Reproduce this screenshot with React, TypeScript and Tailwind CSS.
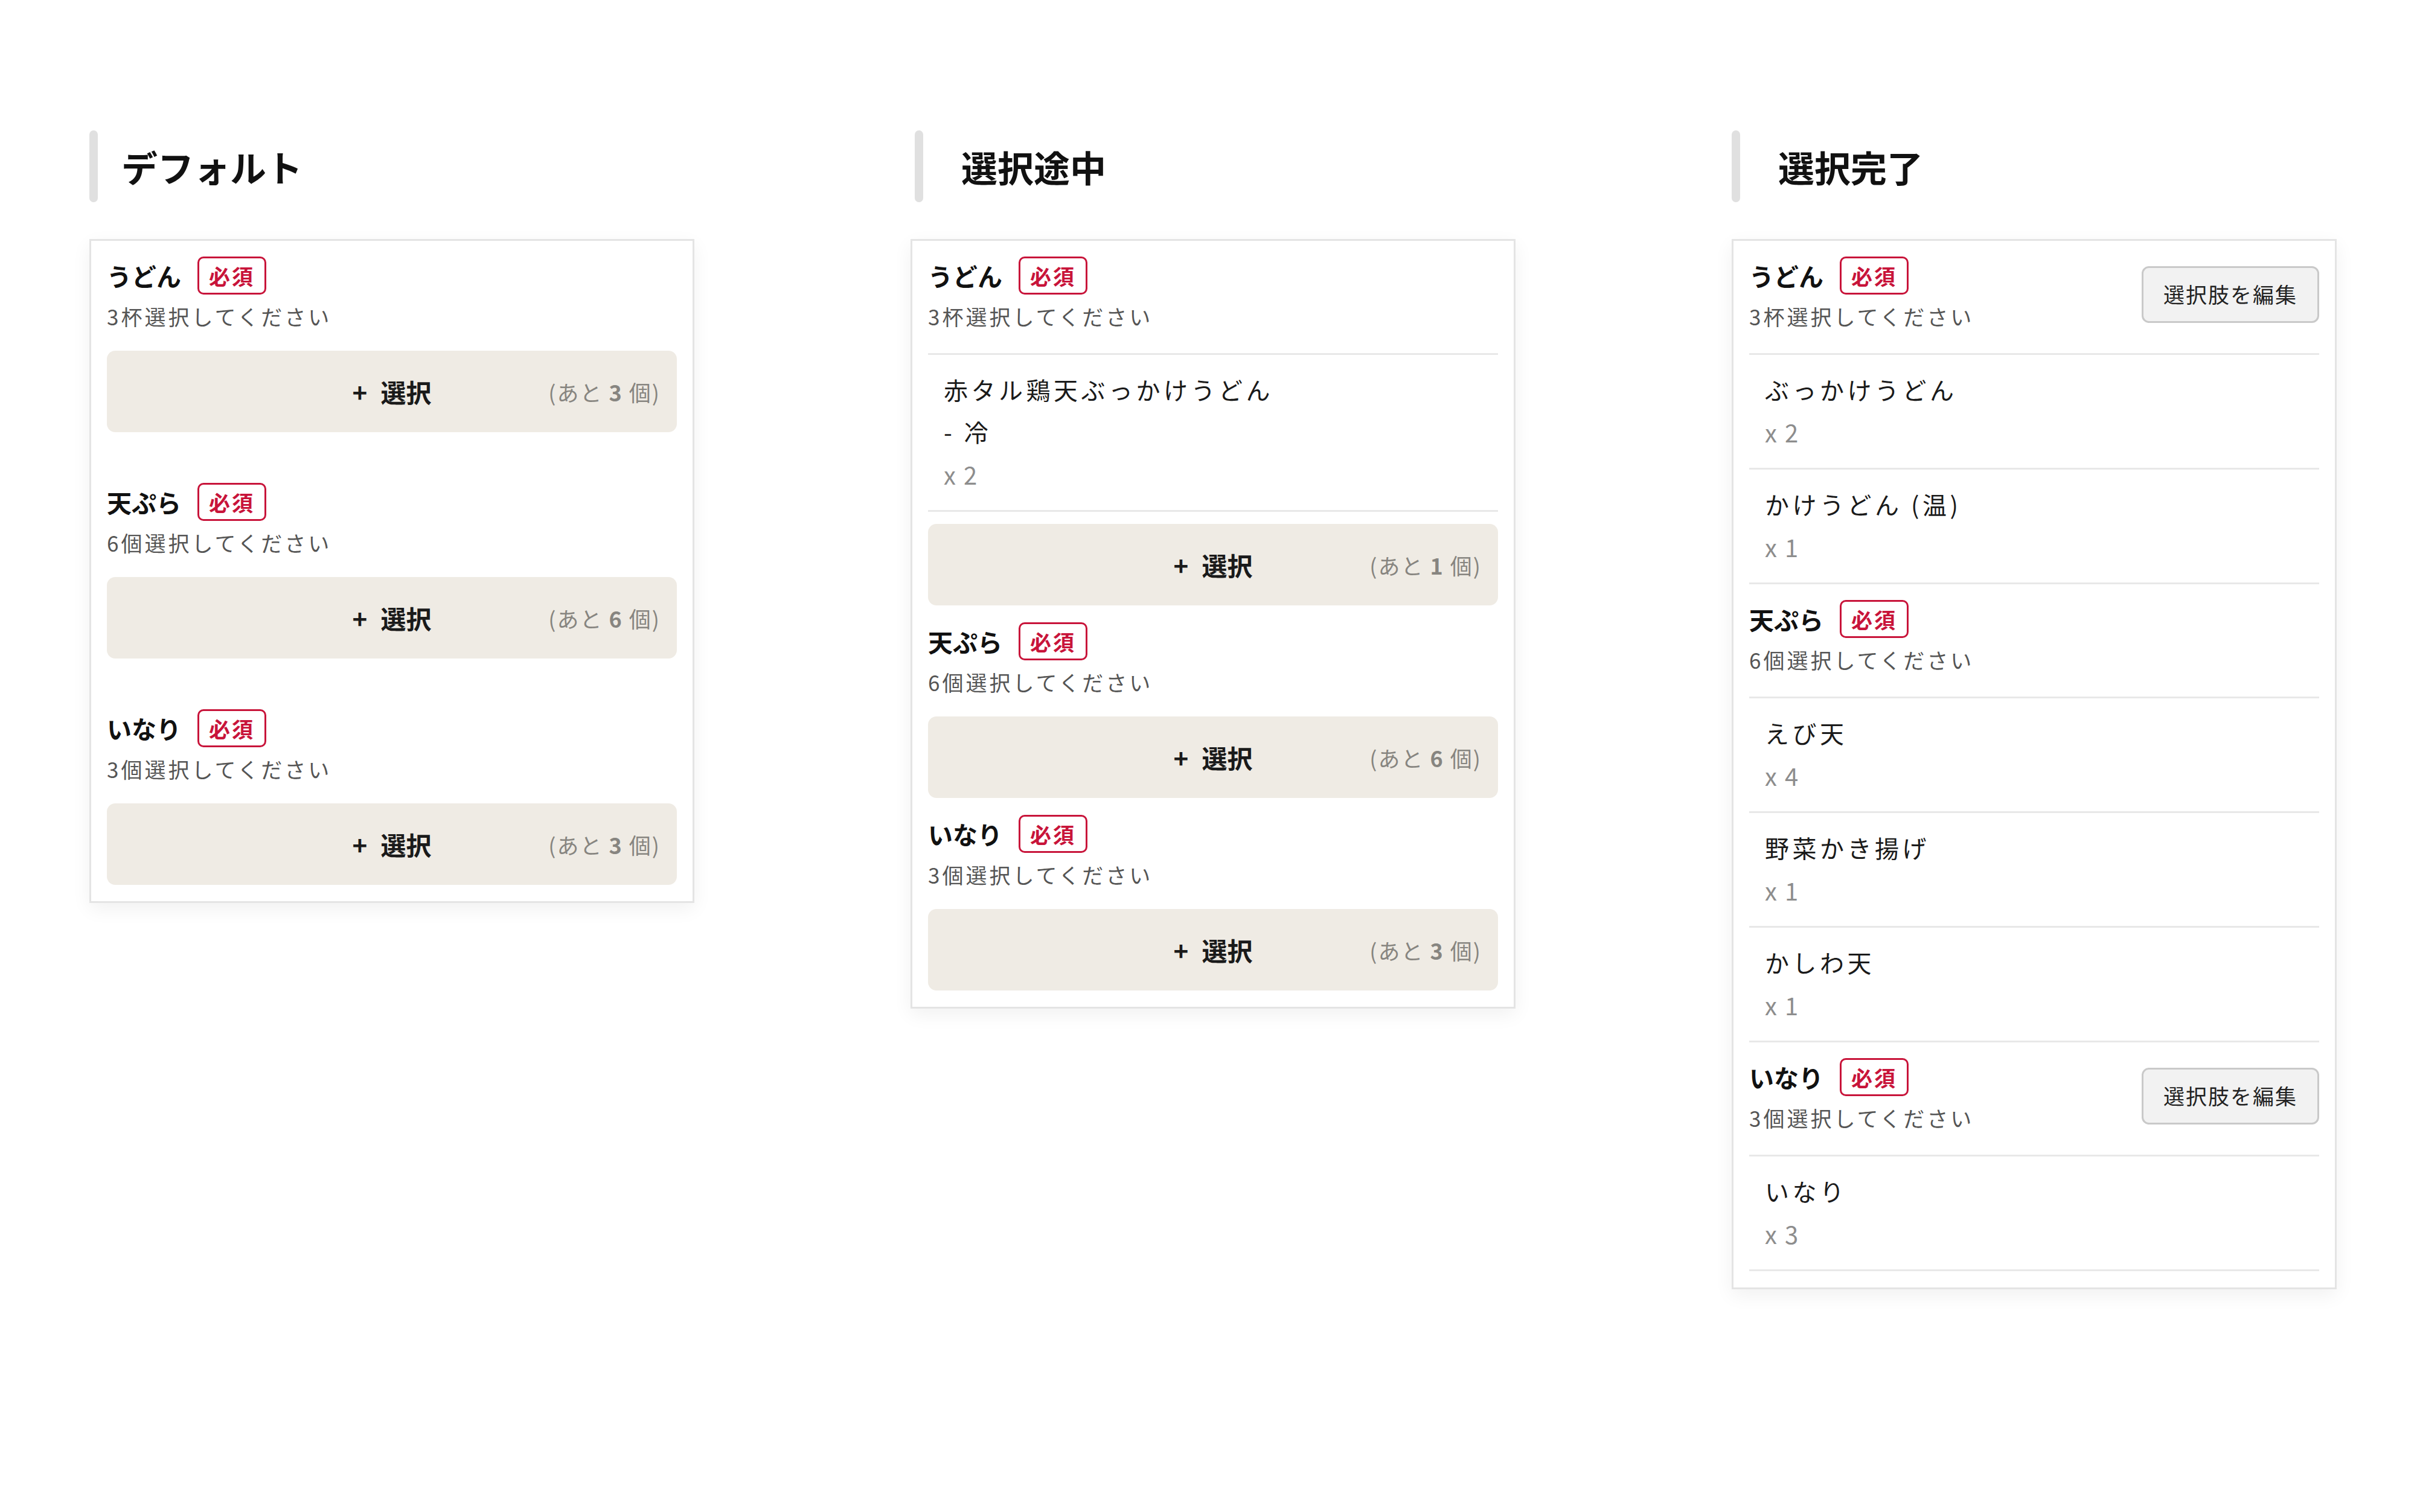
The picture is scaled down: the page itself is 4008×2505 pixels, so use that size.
type Item = { lines: string[]; qty: number };

type Section = {
  name: string;
  note: string;
  remaining: number;
  items?: Item[];
  edit?: boolean;
};

type Mode = "default" | "progress" | "done";

const defaultSections: Section[] = [
  { name: "うどん", note: "3杯選択してください", remaining: 3 },
  { name: "天ぷら", note: "6個選択してください", remaining: 6 },
  { name: "いなり", note: "3個選択してください", remaining: 3 },
];

const progressSections: Section[] = [
  {
    name: "うどん",
    note: "3杯選択してください",
    remaining: 1,
    items: [{ lines: ["赤タル鶏天ぶっかけうどん", "- 冷"], qty: 2 }],
  },
  { name: "天ぷら", note: "6個選択してください", remaining: 6 },
  { name: "いなり", note: "3個選択してください", remaining: 3 },
];

const doneSections: Section[] = [
  {
    name: "うどん",
    note: "3杯選択してください",
    remaining: 0,
    edit: true,
    items: [
      { lines: ["ぶっかけうどん"], qty: 2 },
      { lines: ["かけうどん (温)"], qty: 1 },
    ],
  },
  {
    name: "天ぷら",
    note: "6個選択してください",
    remaining: 0,
    items: [
      { lines: ["えび天"], qty: 4 },
      { lines: ["野菜かき揚げ"], qty: 1 },
      { lines: ["かしわ天"], qty: 1 },
    ],
  },
  {
    name: "いなり",
    note: "3個選択してください",
    remaining: 0,
    edit: true,
    items: [{ lines: ["いなり"], qty: 3 }],
  },
];

function Badge() {
  return (
    <span className="flex h-[63px] items-center rounded-[10px] border-[3px] border-[#c8143a] px-[16px] text-[35px] font-bold leading-none tracking-[3px] text-[#c8143a]">
      必須
    </span>
  );
}

function SectionHeader({ section, bordered }: { section: Section; bordered: boolean }) {
  return (
    <div
      className={
        bordered
          ? "flex items-center justify-between border-b-[3px] border-[#e8e8e8] pt-[21px] pb-[30px]"
          : "flex items-center justify-between pt-[21px]"
      }
    >
      <div>
        <div className="flex h-[72px] items-center gap-[27px]">
          <span className="text-[41px] font-bold leading-none text-[#111]">{section.name}</span>
          <Badge />
        </div>
        <div className="text-[35px] leading-[63px] tracking-[4px] text-[#555]">{section.note}</div>
      </div>
      {section.edit && (
        <button className="h-[94px] rounded-[12px] border-[3px] border-[#c9c9c9] bg-[#f2f2f2] px-[33px] text-[35px] tracking-[2px] text-[#222]">
          選択肢を編集
        </button>
      )}
    </div>
  );
}

function SelectedItem({ item }: { item: Item }) {
  return (
    <div className="border-b-[3px] border-[#e8e8e8] px-[26px] pt-[22px] pb-[23px]">
      {item.lines.map((line) => (
        <div key={line} className="text-[40px] leading-[70px] tracking-[5.5px] text-[#1a1a1a]">
          {line}
        </div>
      ))}
      <div className="text-[40px] leading-[72px] tracking-[2px] text-[#8d8d8d]">x {item.qty}</div>
    </div>
  );
}

function SelectButton({ remaining, className }: { remaining: number; className: string }) {
  return (
    <div
      className={`grid h-[135px] grid-cols-[1fr_auto_1fr] items-center rounded-[14px] bg-[#efebe4] ${className}`}
    >
      <span />
      <span className="flex items-center gap-[22px] text-[42px] font-bold text-[#1a1a1a]">
        <span>+</span>
        <span>選択</span>
      </span>
      <span className="justify-self-end pr-[27px] text-[36px] tracking-[2px] text-[#878580]">
        (あと <span className="font-bold">{remaining}</span> 個)
      </span>
    </div>
  );
}

function Card({ sections, mode }: { sections: Section[]; mode: Mode }) {
  return (
    <div className="mt-[61px] w-[1002px] border-[3px] border-[#e4e4e4] bg-white px-[26px] pb-[27px] shadow-[0_10px_30px_rgba(0,0,0,0.06)]">
      {sections.map((s, i) => {
        const hasItems = !!s.items && s.items.length > 0;
        let gap = "";
        if (i > 0 && mode === "default") gap = "mt-[58px]";
        if (i > 0 && mode === "progress") gap = "mt-[2px]";
        return (
          <div key={s.name} className={gap}>
            <SectionHeader section={s} bordered={hasItems} />
            {s.items?.map((it) => (
              <SelectedItem key={it.lines[0]} item={it} />
            ))}
            {mode !== "done" && (
              <SelectButton remaining={s.remaining} className={hasItems ? "mt-[20px]" : "mt-[26px]"} />
            )}
          </div>
        );
      })}
    </div>
  );
}

function Title({ label, offset }: { label: string; offset: string }) {
  return (
    <div className={`flex h-[119px] items-center ${offset}`}>
      <div className="h-full w-[14px] rounded-full bg-[#e0e0e0]" />
      <h2 className="text-[60px] font-bold leading-none text-[#111]">{label}</h2>
    </div>
  );
}

export default function App() {
  return (
    <div className="flex min-h-[2505px] items-start gap-[358px] bg-white pl-[148px] pt-[216px] font-['Noto_Sans_CJK_JP','Noto_Sans',sans-serif]">
      <div className="w-[1002px]">
        <Title label="デフォルト" offset="[&>h2]:ml-[39px]" />
        <Card sections={defaultSections} mode="default" />
      </div>
      <div className="w-[1002px]">
        <Title label="選択途中" offset="pl-[7px] [&>h2]:ml-[63px]" />
        <Card sections={progressSections} mode="progress" />
      </div>
      <div className="w-[1002px]">
        <Title label="選択完了" offset="[&>h2]:ml-[63px]" />
        <Card sections={doneSections} mode="done" />
      </div>
    </div>
  );
}
